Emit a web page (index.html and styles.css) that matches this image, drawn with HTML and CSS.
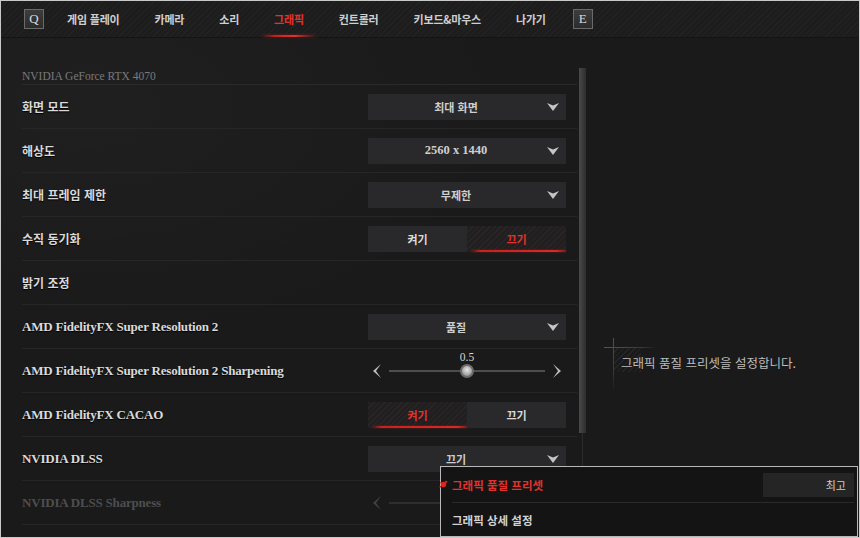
FILE: index.html
```html
<!DOCTYPE html>
<html lang="ko">
<head>
  <meta charset="UTF-8">
  <title>그래픽 설정</title>
  <link rel="stylesheet" href="styles.css">
</head>
<body>
  <div class="screen">
    <nav class="tabs">
      <span class="key">Q</span>
      <span class="tab">게임 플레이</span>
      <span class="tab">카메라</span>
      <span class="tab">소리</span>
      <span class="tab active">그래픽</span>
      <span class="tab">컨트롤러</span>
      <span class="tab">키보드&amp;마우스</span>
      <span class="tab">나가기</span>
      <span class="key">E</span>
    </nav>

    <main class="content">
      <section class="settings">
        <div class="list">
          <div class="gpu">NVIDIA GeForce RTX 4070</div>

          <div class="row">
            <span class="label">화면 모드</span>
            <div class="select"><span>최대 화면</span><svg class="caret" viewBox="0 0 12 8"><polygon points="0,0 6,2.5 12,0 6,8"/></svg></div>
          </div>
          <div class="row">
            <span class="label">해상도</span>
            <div class="select"><span class="num">2560 x 1440</span><svg class="caret" viewBox="0 0 12 8"><polygon points="0,0 6,2.5 12,0 6,8"/></svg></div>
          </div>
          <div class="row">
            <span class="label">최대 프레임 제한</span>
            <div class="select"><span>무제한</span><svg class="caret" viewBox="0 0 12 8"><polygon points="0,0 6,2.5 12,0 6,8"/></svg></div>
          </div>
          <div class="row">
            <span class="label">수직 동기화</span>
            <div class="toggle"><span>켜기</span><span class="on">끄기</span></div>
          </div>
          <div class="row">
            <span class="label">밝기 조정</span>
          </div>
          <div class="row">
            <span class="label en">AMD FidelityFX Super Resolution 2</span>
            <div class="select"><span>품질</span><svg class="caret" viewBox="0 0 12 8"><polygon points="0,0 6,2.5 12,0 6,8"/></svg></div>
          </div>
          <div class="row">
            <span class="label en">AMD FidelityFX Super Resolution 2 Sharpening</span>
            <div class="slider">
              <svg class="arrow" viewBox="0 0 8 14"><polygon points="8,0 3,7 8,14 0,7"/></svg>
              <div class="track">
                <div class="knob" style="left: 50%"><span class="value">0.5</span></div>
              </div>
              <svg class="arrow" viewBox="0 0 8 14"><polygon points="0,0 8,7 0,14 5,7"/></svg>
            </div>
          </div>
          <div class="row">
            <span class="label en">AMD FidelityFX CACAO</span>
            <div class="toggle"><span class="on">켜기</span><span>끄기</span></div>
          </div>
          <div class="row">
            <span class="label en">NVIDIA DLSS</span>
            <div class="select"><span>끄기</span><svg class="caret" viewBox="0 0 12 8"><polygon points="0,0 6,2.5 12,0 6,8"/></svg></div>
          </div>
          <div class="row disabled">
            <span class="label en">NVIDIA DLSS Sharpness</span>
            <div class="slider">
              <svg class="arrow" viewBox="0 0 8 14"><polygon points="8,0 3,7 8,14 0,7"/></svg>
              <div class="track"></div>
              <svg class="arrow" viewBox="0 0 8 14"><polygon points="0,0 8,7 0,14 5,7"/></svg>
            </div>
          </div>
        </div>
        <div class="scrollbar"><div class="thumb"></div></div>
      </section>

      <aside class="info">
        <p class="desc">그래픽 품질 프리셋을 설정합니다.</p>
      </aside>
    </main>

    <div class="preset-menu">
      <div class="preset-row current">
        <svg class="blood" viewBox="0 0 10 10"><circle cx="5" cy="5" r="3"/><circle cx="8" cy="2" r="1.3"/><circle cx="1.5" cy="7.5" r="1"/><circle cx="2" cy="3" r="0.8"/></svg>
        <span class="preset-name">그래픽 품질 프리셋</span>
        <span class="preset-value">최고</span>
      </div>
      <div class="preset-row">
        <span class="preset-name">그래픽 상세 설정</span>
      </div>
    </div>
  </div>
</body>
</html>
```

FILE: styles.css
```css
body {
  margin: 0;
  background: #fff;
  font-family: "Noto Sans CJK KR", "Noto Sans", sans-serif;
}

.screen {
  position: relative;
  width: 860px;
  height: 538px;
  box-sizing: border-box;
  border: 1px solid #c9c9c9;
  background-color: #1a1a1b;
  background-image: radial-gradient(ellipse at 10% 20%, rgba(255,255,255,0.025), transparent 40%);
  overflow: hidden;
  display: flex;
  flex-direction: column;
}

/* top tab bar */
.tabs {
  height: 37px;
  flex: none;
  display: flex;
  align-items: center;
  gap: 35px;
  padding-left: 23px;
  box-sizing: border-box;
  background-color: #1d1d1e;
  background-image: repeating-linear-gradient(135deg, rgba(255,255,255,0.025) 0 1px, transparent 1px 4px);
  border-bottom: 1px solid #141414;
}

.key {
  width: 20px;
  height: 20px;
  box-sizing: border-box;
  border: 1px solid #6a6a6a;
  background: linear-gradient(#3d3d3d, #2c2c2c);
  color: #dcdcdc;
  font-family: "Liberation Serif", serif;
  font-size: 13px;
  line-height: 18px;
  text-align: center;
}

.key:first-child { margin-right: -12px; }
.key:last-child { margin-left: -8px; }

.tab {
  position: relative;
  color: #cfcfcf;
  font-size: 11px;
  font-weight: 700;
  letter-spacing: -0.2px;
}

.tab.active { color: #e0332c; }

.tab.active::after {
  content: "";
  position: absolute;
  left: -12px;
  right: -12px;
  top: 24px;
  height: 2px;
  background: linear-gradient(90deg, transparent, #c8221c 25%, #e0332c 60%, transparent);
  box-shadow: 0 0 3px rgba(200, 30, 30, 0.5);
}

/* main area */
.content {
  flex: 1;
  display: flex;
  min-height: 0;
}

.settings {
  width: 590px;
  display: flex;
  flex: none;
}

.list {
  width: 555px;
  margin-left: 21px;
  padding-top: 30px;
}

.gpu {
  height: 16px;
  color: #7a7a7a;
  font-family: "Liberation Serif", serif;
  font-size: 11.5px;
  line-height: 16px;
  border-bottom: 1px solid #2a2a2a;
}

.row {
  height: 43px;
  display: grid;
  grid-template-columns: 346px 198px;
  align-items: center;
  border-bottom: 1px solid #262627;
}

.label {
  color: #dadada;
  font-size: 12px;
  font-weight: 700;
  text-shadow: 0 1px 1px #000;
}

.label.en {
  font-family: "Liberation Serif", serif;
  font-size: 13px;
  font-weight: 700;
  letter-spacing: -0.2px;
}

.disabled .label { color: #4e4e4e; text-shadow: none; }

.select {
  height: 26px;
  background: #29292b;
  display: flex;
  align-items: center;
  padding-right: 7px;
  color: #cfcfcf;
  font-size: 11px;
  font-weight: 700;
}

.select span { flex: 1; text-align: center; }

.select .num {
  font-family: "Liberation Serif", serif;
  font-size: 12.5px;
  font-weight: 700;
}

.caret {
  width: 12px;
  height: 8px;
  margin-left: 3px;
  fill: #c4c4c4;
}

.toggle {
  height: 26px;
  display: flex;
  background: #29292b;
  font-size: 11px;
  font-weight: 700;
}

.toggle span {
  position: relative;
  flex: 1;
  text-align: center;
  line-height: 26px;
  color: #dcdcdc;
}

.toggle .on {
  color: #e0332c;
  background: repeating-linear-gradient(135deg, #2a2526 0 1px, #221f20 1px 4px);
}

.toggle .on::after {
  content: "";
  position: absolute;
  left: 4px;
  right: 0;
  bottom: 0;
  height: 2px;
  background: linear-gradient(90deg, transparent, #c8221c 10%, #d72a22 90%, rgba(200, 30, 30, 0.4));
  box-shadow: 0 0 2px rgba(210, 30, 30, 0.6);
}

.slider {
  display: flex;
  align-items: center;
  gap: 8px;
  padding: 0 5px;
}

.arrow {
  width: 8px;
  height: 14px;
  fill: #bdbdbd;
}

.track {
  position: relative;
  flex: 1;
  height: 2px;
  background: #4e4e4e;
}

.knob {
  position: absolute;
  top: -6px;
  width: 14px;
  height: 14px;
  margin-left: -7px;
  box-sizing: border-box;
  border-radius: 50%;
  border: 2px solid #6b6b6b;
  background: radial-gradient(circle at 50% 40%, #e8e8e8, #9a9a9a 70%);
}

.value {
  position: absolute;
  left: 50%;
  bottom: 13px;
  transform: translateX(-50%);
  color: #d4d4d4;
  font-family: "Liberation Serif", serif;
  font-size: 11.5px;
}

.disabled .arrow { fill: #444; }
.disabled .arrow:last-child { visibility: hidden; }
.disabled .track { background: #2e2e2e; }

.scrollbar {
  width: 7px;
  margin-left: 2px;
  margin-top: 30px;
  display: flex;
  flex-direction: column;
  align-items: center;
}

.thumb {
  width: 7px;
  height: 365px;
  background: linear-gradient(90deg, #4a4a4a, #383838 60%, #2e2e2e);
}

.scrollbar::after {
  content: "";
  flex: 1;
  width: 1px;
  background: #2c2c2c;
}

/* description */
.info {
  flex: 1;
}

.desc {
  position: relative;
  margin: 309px 0 0 22px;
  padding: 7px 0 0 8px;
  color: #bdbdbd;
  font-size: 12.5px;
  line-height: 18px;
  background: repeating-linear-gradient(135deg, rgba(255,255,255,0.05) 0 1px, transparent 1px 4px) no-repeat 0 0 / 28px 45px;
}

.desc::before {
  content: "";
  position: absolute;
  left: 0;
  top: -9px;
  width: 1px;
  height: 54px;
  background: linear-gradient(#505050, #3a3a3a 60%, transparent);
}

.desc::after {
  content: "";
  position: absolute;
  left: -9px;
  top: 0;
  width: 53px;
  height: 1px;
  background: linear-gradient(90deg, #555, #3a3a3a 70%, transparent);
}

/* preset overlay */
.preset-menu {
  position: absolute;
  left: 439px;
  top: 465px;
  width: 418px;
  height: 71px;
  box-sizing: border-box;
  border: 1px solid #b8b8b8;
  background: #141414;
}

.preset-row {
  display: flex;
  align-items: center;
  height: 33px;
  margin: 0 3px 0 11px;
}

.preset-row.current {
  height: 35px;
  border-bottom: 1px solid #2a2a2a;
}

.blood {
  width: 9px;
  height: 9px;
  margin-left: -13px;
  margin-right: 4px;
  fill: #d42a22;
}

.preset-name {
  flex: 1;
  color: #d2d2d2;
  font-size: 11.5px;
  font-weight: 700;
}

.current .preset-name { color: #e0332c; }

.preset-value {
  width: 91px;
  height: 24px;
  box-sizing: border-box;
  padding-right: 8px;
  background: #252526;
  color: #cdcdcd;
  font-size: 11px;
  line-height: 24px;
  text-align: right;
}
```
